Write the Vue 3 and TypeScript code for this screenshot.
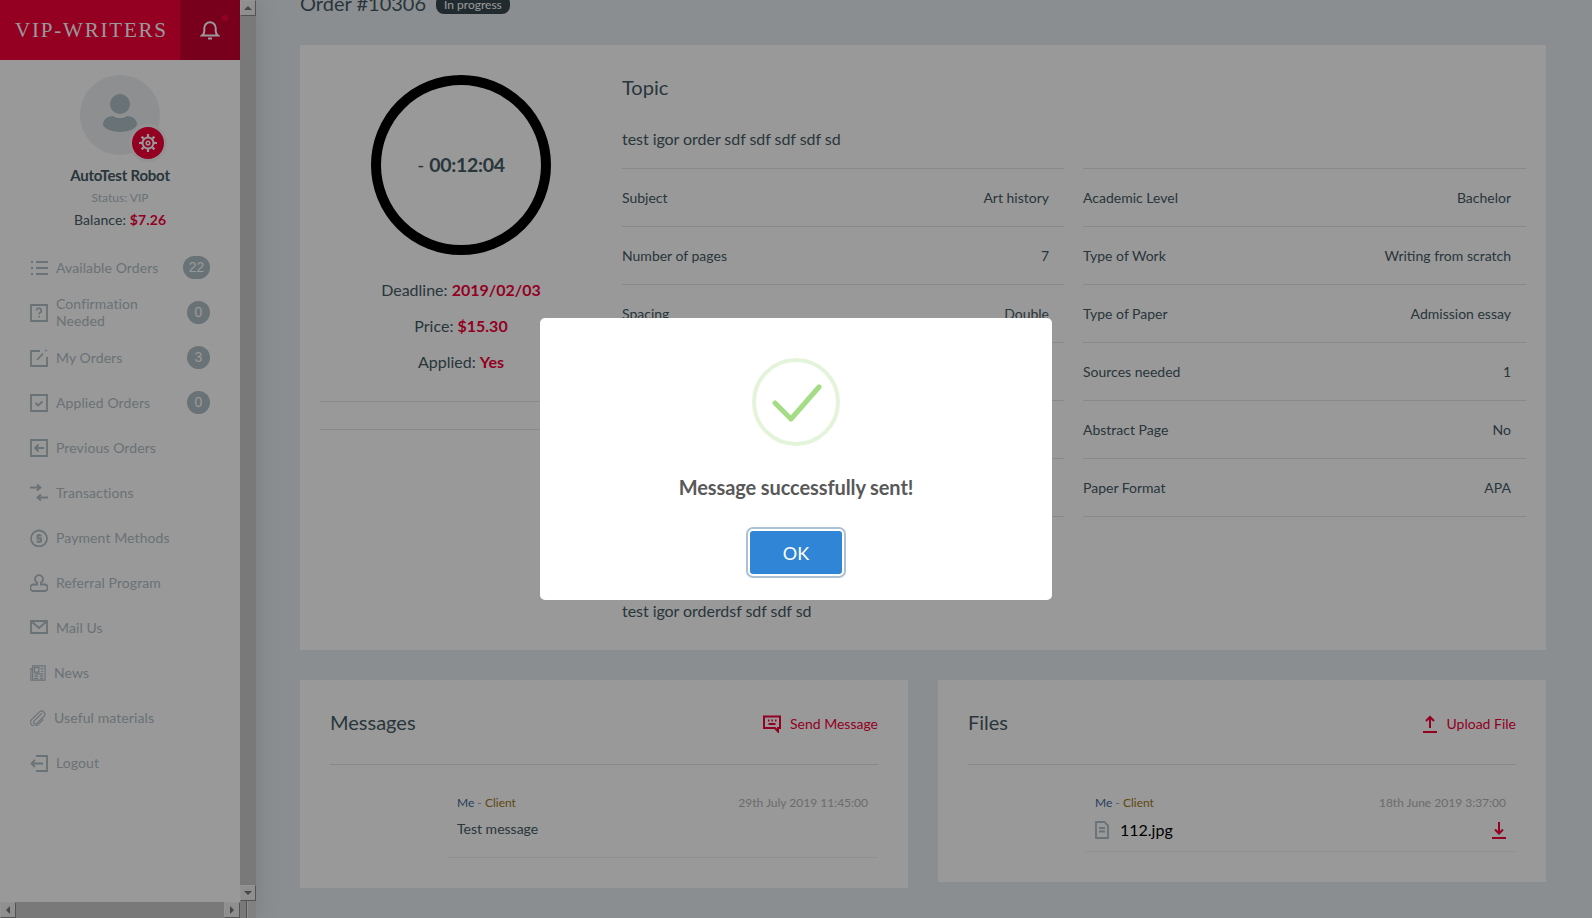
<script setup lang="ts">
interface NavItem { label: string; paths: string; badge?: number; narrow?: boolean }
const nav: NavItem[] = [
  { label: 'Available Orders', paths: 'M1 3h2M6 3h12M1 9h2M6 9h12M1 15h2M6 15h12', badge: 22 },
  { label: 'Confirmation Needed', paths: 'M1 1h16v16H1zM6.6 6.6a2.4 2.4 0 1 1 3.7 2c-.9.6-1.3 1-1.3 2M9 12v1.6', badge: 0 },
  { label: 'My Orders', paths: 'M10 2H1v15h16V8M7 11l6-6.5M15.5 2l1-1', badge: 3 },
  { label: 'Applied Orders', paths: 'M1 1h16v16H1zM5.5 9l2.5 2.5 4.5-4', badge: 0 },
  { label: 'Previous Orders', paths: 'M1 1h16v16H1zM14 9H5M8.5 5.5L5 9l3.5 3.5' },
  { label: 'Transactions', paths: 'M0 3.5h10M7 .5l3.500 3L7 6.500M18 13.500H8M11 10.500l-3.500 3 3.500 3' },
  { label: 'Payment Methods', paths: 'M17 9.500a8 8 0 1 1-16 0 8 8 0 0 1 16 0zM11.500 6.500H7.500v3h3.500v3H6.500M9 5v1.500M9 12.500V14' },
  { label: 'Referral Program', paths: 'M7 10.500V8.500A4 4 0 1 1 11 8.500V10.500H14.500a3 3 0 0 1 0 6.500H3.500a3 3 0 0 1 0-6.500z' },
  { label: 'Mail Us', paths: 'M1 2h16v12H1zM1 2l8 7 8-7' },
  { label: 'News', paths: 'M3 1h14v16H3zM3 4H1v13h2M5 3h5v5H5zM12 4h3M12 7h3M5 10h10M5 12.500h4M5 15h4M11 12.500h4M11 15h4', narrow: true },
  { label: 'Useful materials', paths: 'M13.500 3.500L4.500 12.500a2 2 0 0 0 3 2.800l8-8a3.500 3.500 0 0 0-5-5L2 10.500a4.600 4.600 0 0 0 6.500 6.500L15 10.500', narrow: true },
  { label: 'Logout', paths: 'M6 2h11v15H6M13 9.500H2M5 6L1.500 9.500 5 13' },
]
interface Row { label: string; value: string }
const colA: Row[] = [
  { label: 'Subject', value: 'Art history' },
  { label: 'Number of pages', value: '7' },
  { label: 'Spacing', value: 'Double' },
  { label: '', value: '' },
  { label: '', value: '' },
  { label: '', value: '' },
]
const colB: Row[] = [
  { label: 'Academic Level', value: 'Bachelor' },
  { label: 'Type of Work', value: 'Writing from scratch' },
  { label: 'Type of Paper', value: 'Admission essay' },
  { label: 'Sources needed', value: '1' },
  { label: 'Abstract Page', value: 'No' },
  { label: 'Paper Format', value: 'APA' },
]
</script>

<template>
  <div class="page">
    <aside class="aside">
      <div class="aside-left">
        <div class="side">
          <header class="brand">
            <div class="logo">VIP-WRITERS</div>
            <div class="bell">
              <svg width="20" height="20" viewBox="0 0 20 20" fill="none" stroke="currentColor" stroke-width="2">
                <path d="M2 15.500c1.500-1 2.300-2 2.300-4.500V8a5.700 5.700 0 0 1 11.400 0v3c0 2.500.8 3.500 2.300 4.500zM8 18.500h4" />
              </svg>
              <span class="dot"></span>
            </div>
          </header>
          <div class="user">
            <div class="avatar">
              <svg width="36" height="40" viewBox="0 0 36 40" class="person">
                <circle cx="18" cy="10" r="10" fill="#b0bec5" />
                <path d="M1 31c0-6 5-9 10-9 2 1.500 4 2 7 2s5-.5 7-2c5 0 10 3 10 9-2 4-9 7-17 7S3 35 1 31z" fill="#b0bec5" />
              </svg>
              <span class="gear">
                <svg width="20" height="20" viewBox="0 0 20 20" fill="none" stroke="#fff">
                  <circle cx="10" cy="10" r="5.500" stroke-width="2" />
                  <circle cx="10" cy="10" r="1.800" stroke-width="1.500" />
                  <path stroke-width="2.200" d="M10 1v3M10 16v3M1 10h3M16 10h3M3.600 3.600l2.100 2.100M14.300 14.300l2.100 2.100M3.600 16.400l2.100-2.100M14.300 5.700l2.100-2.100" />
                </svg>
              </span>
            </div>
            <div class="name">AutoTest Robot</div>
            <div class="status">Status: VIP</div>
            <div class="balance">Balance: <b>$7.26</b></div>
          </div>
          <nav class="nav">
            <a v-for="item in nav" :key="item.label" class="nav-item">
              <svg :class="['nav-icon', { narrow: item.narrow }]" viewBox="0 0 18 18" fill="none" stroke="currentColor"
                   :stroke-width="item.narrow ? 1.300 : 1.800">
                <path :d="item.paths" />
              </svg>
              <span class="nav-label">{{ item.label }}</span>
              <span v-if="item.badge !== undefined" :class="['badge', { wide: item.badge > 9 }]">{{ item.badge }}</span>
            </a>
          </nav>
        </div>
        <div class="hbar">
          <span class="sb-btn"><i class="tri left"></i></span>
          <span class="sb-fill"></span>
          <span class="sb-btn"><i class="tri right"></i></span>
        </div>
      </div>
      <div class="vbar">
        <span class="sb-btn short"><i class="tri up"></i></span>
        <span class="sb-fill"></span>
        <span class="sb-btn"><i class="tri down"></i></span>
        <span class="corner"></span>
      </div>
    </aside>

    <main class="main">
      <div class="title-row">
        <h1 class="title">Order #10306</h1>
        <span class="pill">In progress</span>
      </div>

      <section class="card order">
        <div class="timer-col">
          <div class="ring"><span class="clock">- <b>00:12:04</b></span></div>
          <p class="fact first">Deadline: <b>2019/02/03</b></p>
          <p class="fact">Price: <b>$15.30</b></p>
          <p class="fact">Applied: <b>Yes</b></p>
          <div class="split"></div>
        </div>
        <div class="info">
          <h2 class="h-topic">Topic</h2>
          <p class="topic">test igor order sdf sdf sdf sdf sd</p>
          <div class="cols">
            <div class="col">
              <div v-for="(r, i) in colA" :key="i" class="row"><span>{{ r.label }}</span><span>{{ r.value }}</span></div>
            </div>
            <div class="col">
              <div v-for="r in colB" :key="r.label" class="row"><span>{{ r.label }}</span><span>{{ r.value }}</span></div>
            </div>
          </div>
          <p class="desc">test igor orderdsf sdf sdf sd</p>
        </div>
      </section>

      <div class="lower">
        <section class="card box messages">
          <div class="box-head">
            <h2>Messages</h2>
            <a class="action">
              <svg width="18" height="18" viewBox="0 0 18 18" fill="none" stroke="currentColor" stroke-width="2">
                <path d="M1 1.500h16v11.500h-2v3.500l-3-3.500H1zM5 5.500h1.500M8.500 5.500H10M12 5.500h1.500M5.500 9h7" />
              </svg>
              Send Message
            </a>
          </div>
          <div class="entry">
            <div class="meta"><span><span class="me">Me</span> - <span class="client">Client</span></span><span class="date">29th July 2019 11:45:00</span></div>
            <div class="msg">Test message</div>
          </div>
        </section>
        <section class="card box files">
          <div class="box-head">
            <h2>Files</h2>
            <a class="action">
              <svg width="14" height="18" viewBox="0 0 14 18" fill="none" stroke="currentColor" stroke-width="2">
                <path d="M7 13V2M3 6l4-4 4 4M0 17h14" />
              </svg>
              Upload File
            </a>
          </div>
          <div class="entry file-entry">
            <div class="meta"><span><span class="me">Me</span> - <span class="client">Client</span></span><span class="date">18th June 2019 3:37:00</span></div>
            <div class="file">
              <svg class="doc" width="14" height="18" viewBox="0 0 14 18" fill="none" stroke="#b0bec5" stroke-width="1.800">
                <path d="M1 1h8.500L13 4.500V17H1zM4 7h6M4 10.500h6" />
              </svg>
              <span class="fname">112.jpg</span>
              <svg class="dl" width="14" height="18" viewBox="0 0 14 18" fill="none" stroke="#f5003a" stroke-width="2">
                <path d="M7 1v11M3 8.500l4 4 4-4M0 17h14" />
              </svg>
            </div>
          </div>
        </section>
      </div>
    </main>

    <div class="overlay">
      <div class="modal">
        <div class="success">
          <svg class="tick" width="52" height="40" viewBox="0 0 52 40" fill="none" stroke="#a5dc86" stroke-width="5" stroke-linecap="round" stroke-linejoin="round">
            <path d="M3 20l16 16L47 4" />
          </svg>
        </div>
        <div class="msg-title">Message successfully sent!</div>
        <button class="ok" type="button">OK</button>
      </div>
    </div>
  </div>
</template>

<style scoped>
.page { display: flex; height: 918px; overflow: hidden; background: #e8edf0; font-family: Lato, "Open Sans", sans-serif; color: #455a64; position: relative; font-size: 14px; }
.aside { width: 256px; flex: none; display: flex; height: 918px; position: relative; box-shadow: 0 0 24px rgba(0,0,0,.12); z-index: 1; }
.aside-left { width: 240px; display: flex; flex-direction: column; }
.side { flex: 1; background: #fff; min-height: 0; }
.brand { height: 60px; display: flex; background: #f5003a; }
.logo { flex: 1; padding-left: 15px; line-height: 61px; font-family: "Liberation Serif", serif; font-size: 21px; letter-spacing: 1.800px; color: #fff; white-space: nowrap; }
.bell { width: 60px; background: #c80030; color: #fff; display: flex; align-items: center; justify-content: center; position: relative; }
.dot { position: absolute; left: 42px; top: 15px; width: 6px; height: 6px; border-radius: 50%; background: #f5003a; }
.user { display: flex; flex-direction: column; align-items: center; padding-top: 15px; }
.avatar { width: 80px; height: 80px; border-radius: 50%; background: #eceff1; position: relative; display: flex; align-items: center; justify-content: center; }
.person { margin-top: -3px; }
.gear { position: absolute; left: 52px; top: 52px; width: 32px; height: 32px; border-radius: 50%; background: #f5003a; box-shadow: 0 0 0 3px #f5f5f5; display: flex; align-items: center; justify-content: center; }
.name { margin-top: 10px; font-size: 15px; font-weight: 700; line-height: 20px; letter-spacing: -.2px; }
.status { font-size: 12px; line-height: 16px; margin-top: 5px; color: #b0bec5; }
.balance { font-size: 14px; line-height: 20px; margin-top: 4px; letter-spacing: .1px; }
.balance b { color: #f5003a; }
.nav { margin-top: 15px; display: flex; flex-direction: column; padding: 0 30px; }
.nav-item { height: 45px; display: flex; align-items: center; color: #b0bec5; line-height: 17px; letter-spacing: .1px; }
.nav-icon { width: 18px; height: 18px; flex: none; margin-right: 8px; }
.nav-icon.narrow { width: 16px; height: 16px; }
.nav-label { flex: 1; padding-right: 10px; }
.nav-item:nth-child(2) .nav-label { margin-top: -2px; }
.badge { flex: none; min-width: 23px; height: 23px; border-radius: 12px; background: #b0bec5; color: #fff; text-align: center; line-height: 23px; font-family: "Liberation Sans", sans-serif; font-size: 14px; letter-spacing: 0; }
.badge.wide { width: 27px; }

.hbar { height: 16px; flex: none; display: flex; background: #cacaca; }
.vbar { width: 16px; flex: none; display: flex; flex-direction: column; background: #cacaca; }
.sb-fill { flex: 1; }
.sb-btn { width: 16px; height: 16px; flex: none; background: #eee; border: 1px solid; border-color: #f5f5f5 #8a8a8a #8a8a8a #f5f5f5; box-sizing: border-box; display: flex; align-items: center; justify-content: center; }
.corner { height: 17px; flex: none; background: linear-gradient(90deg, #cacaca 0 6px, #8a8a8a 6px 7px, #f0f0f0 7px 8px, #d8d8d8 8px); }
.tri { width: 0; height: 0; display: block; border: 4px solid transparent; }
.tri.up { border-bottom-color: #777; border-top: 0; }
.tri.down { border-top-color: #777; border-bottom: 0; }
.tri.left { border-right-color: #777; border-left: 0; }
.tri.right { border-left-color: #777; border-right: 0; }

.main { flex: 1; min-width: 0; padding: 0 46px 0 44px; }
.title-row { height: 45px; display: flex; align-items: flex-start; margin-top: -12px; padding-bottom: 12px; }
.title { margin: 0; font-size: 20px; font-weight: 400; line-height: 30px; color: #455a64; }
.pill { margin: 7px 0 0 10px; height: 19px; padding: 0 8px; background: #37474f; border-radius: 8px; color: #fff; font-size: 12px; line-height: 19px; }
.card { background: #fff; }
.order { display: flex; height: 605px; padding: 0 20px; }
.timer-col { width: 282px; margin-right: 20px; flex: none; display: flex; flex-direction: column; align-items: center; padding-top: 30px; }
.ring { width: 180px; height: 180px; box-sizing: border-box; border: 10px solid #000; border-radius: 50%; display: flex; align-items: center; justify-content: center; font-size: 19px; white-space: pre; }
.clock { margin-top: -2px; }
.ring b { font-weight: 700; font-size: 19.500px; letter-spacing: -.3px; }
.fact { margin: 0; font-size: 16px; line-height: 36px; white-space: nowrap; }
.fact.first { margin-top: 17px; }
.fact b { color: #f5003a; }
.split { width: 300px; align-self: flex-start; height: 27px; margin-top: 21px; border-top: 1px solid #e4e4e4; border-bottom: 1px solid #e4e4e4; }
.info { flex: 1; min-width: 0; }
.h-topic { margin: 0; padding-top: 28px; font-size: 20px; font-weight: 400; line-height: 28px; }
.topic { margin: 0; padding-top: 25px; padding-bottom: 17px; font-size: 16px; line-height: 25px; letter-spacing: -.05px; }
.cols { display: flex; gap: 19px; }
.col { width: 442px; flex: none; }
.col + .col { width: 443px; }
.row { height: 58px; box-sizing: border-box; display: flex; justify-content: space-between; align-items: center; padding-right: 15px; border-top: 1px solid #e4e4e4; }
.row:last-child { height: 59px; border-bottom: 1px solid #e4e4e4; }
.desc { margin: 82px 0 0; font-size: 16px; line-height: 24px; letter-spacing: -.05px; }

.lower { display: flex; justify-content: space-between; align-items: flex-start; margin-top: 30px; }
.box { width: 608px; box-sizing: border-box; padding: 0 30px; }
.messages { height: 208px; }
.files { height: 202px; }
.box-head { height: 85px; display: flex; justify-content: space-between; align-items: center; border-bottom: 1px solid #e4e4e4; box-sizing: border-box; }
.box-head h2 { margin: 0; font-size: 20px; font-weight: 400; }
.action { display: flex; align-items: center; gap: 9px; margin-top: 3px; color: #f5003a; font-size: 14px; }
.entry { margin-left: 117px; padding: 30px 10px 0; height: 93px; box-sizing: border-box; border-bottom: 1px solid #f0f0f0; }
.file-entry { height: 87px; }
.meta { display: flex; justify-content: space-between; font-size: 12px; line-height: 16px; color: #90a4ae; }
.me { color: #3f6a9a; }
.client { color: #a07820; }
.date { color: #b4b4b4; }
.msg { margin-top: 8px; font-size: 14px; line-height: 20px; }
.file { display: flex; align-items: center; margin-top: 9px; color: #000; }
.doc { margin-right: 11px; }
.fname { flex: 1; font-size: 16px; }

.overlay { position: absolute; inset: 0; z-index: 5; background: rgba(0,0,0,.4); display: flex; align-items: center; justify-content: center; }
.modal { width: 512px; height: 282px; box-sizing: border-box; background: #fff; border-radius: 5px; padding-top: 40px; display: flex; flex-direction: column; align-items: center; }
.success { width: 88px; height: 88px; box-sizing: border-box; border: 4px solid rgba(165,220,134,.3); border-radius: 50%; display: flex; align-items: center; justify-content: center; }
.tick { margin-left: 3px; margin-top: 1px; }
.msg-title { margin-top: 26px; font-size: 20px; font-weight: 700; line-height: 30px; color: #595959; letter-spacing: -.1px; }
.ok { margin-top: 29px; width: 92px; height: 43px; border: 0; border-radius: 3px; background: #3085d6; color: #fff; font-family: Lato, sans-serif; font-size: 18px; box-shadow: 0 0 0 2px #fff, 0 0 0 4px rgba(50,100,150,.4); }
</style>
